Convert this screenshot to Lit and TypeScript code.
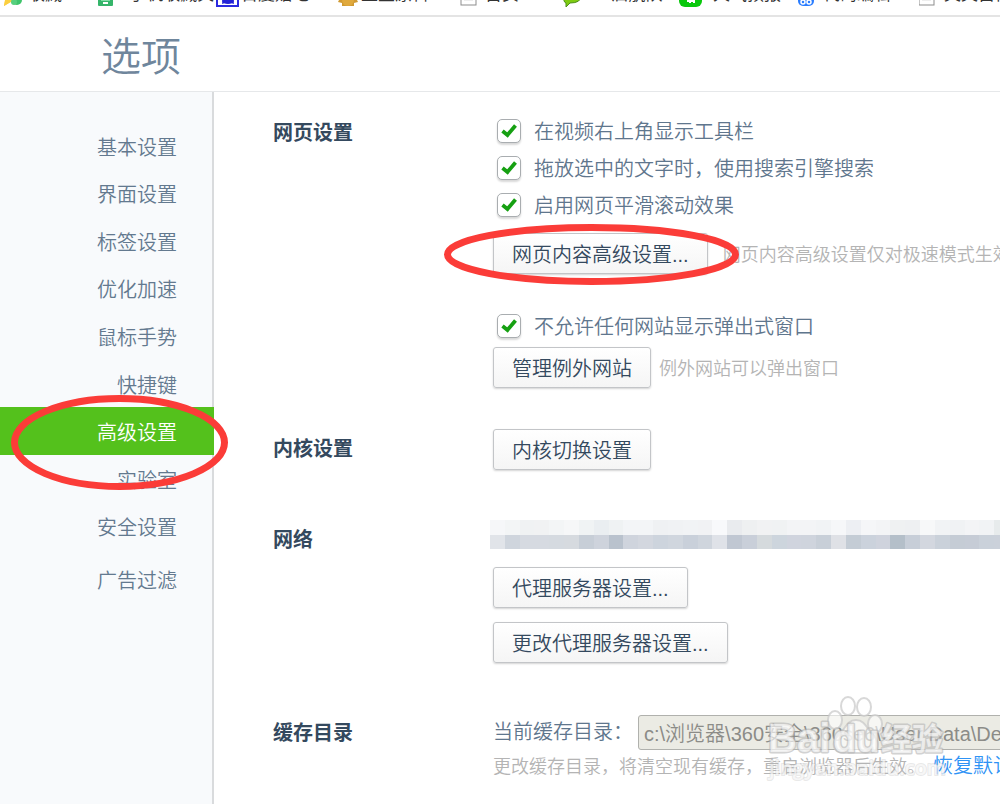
import { LitElement, html, css, svg } from "lit";
import { customElement, state } from "lit/decorators.js";
import { classMap } from "lit/directives/class-map.js";

const BOOKMARKS = [
  { text: "收藏", icon: svg`<path d="M1 0 10 16 1 22 3 12Z" fill="#f9c32c"/><path d="M1 22 8 18 14 21V10H3Z" fill="#fbcf3f"/><circle cx="14" cy="16" r="5" fill="#3fc46b"/><circle cx="11" cy="18" r="3" fill="#57cf7e"/>` },
  { text: "S手机收藏夹", narrow: true, icon: svg`<rect x="0" y="2" width="15" height="20" rx="1" fill="#35b56a"/><rect x="3" y="5" width="9" height="12" fill="#7fdca4"/><rect x="5" y="18" width="5" height="2" fill="#fff"/>` },
  { text: "百度贴吧", icon: svg`<rect x="1" y="1" width="21" height="21" fill="#fff" stroke="#2a2ae0" stroke-width="2"/><path d="M6 20a6 6 0 0 1 12 0q-6-3-12 0Z" fill="#2323d6"/><ellipse cx="12" cy="17" rx="6" ry="3" fill="#2323d6"/>` },
  { text: "土豆原料", icon: svg`<path d="M0 13H24L21 16 22 18 18 19V22H6V19L2 18 3 16Z" fill="#d09a33"/><circle cx="12" cy="16" r="6" fill="#e0a93d"/>` },
  { text: "首页", icon: svg`<rect x="1" y="0" width="15" height="21" fill="#fff" stroke="#8d8d8d"/><path d="M4 16H13" stroke="#ddd"/>` },
  { text: "UK启航队", icon: svg`<path d="M1 12H18Q18 19 7 19L3 23V19Q0 18 1 12Z" fill="#7ecb12" stroke="#4e8f1a"/>` },
  { text: "天气预报", wide: true, icon: svg`<rect x="0" y="0" width="23" height="23" rx="6" fill="#09c80c"/><path d="M8 17H15M11 13V19M15 13V19" stroke="#fff" stroke-width="2"/>` },
  { text: "代码编辑", icon: svg`<rect x="0" y="2" width="16" height="20" rx="5" fill="#2a7dff"/><circle cx="5" cy="18" r="2" fill="none" stroke="#fff" stroke-width="1.5"/><circle cx="11" cy="18" r="2" fill="none" stroke="#fff" stroke-width="1.5"/>` },
  { text: "文文自传", icon: svg`<rect x="0" y="0" width="15" height="21" fill="#fff" stroke="#8d8d8d"/><path d="M3 16H12" stroke="#ddd"/>` },
];

const MENU = ["基本设置", "界面设置", "标签设置", "优化加速", "鼠标手势", "快捷键", "高级设置", "实验室", "安全设置"];

const MOSAIC = [
  "f6f7f9 f3f5f6 f0f2f3 f1f2f3 f3f5f6 f6f7f8 f0f3f4 eaeef1 eff2f3 f3f5f7 f3f5f7 eff1f3 f0f2f4 f1f3f5 f1f2f4 f8f9fb e9ebee eef0f1 f1f2f3 f0f2f3 f3f4f6 f3f4f6 f1f3f5 f6f7f9 edeff3 f5f6f8 f3f4f6 eff1f2 eef0f2 f7f8f9 f1f3f5 f0f2f4 f3f4f6 f1f3f5 e7ebec",
  "e1e4e9 cfd5dd d6dae1 d6dae1 d5dae0 d6dadf c7ced7 ced3dc b9c2cd cfd4dd d3d7df cdd4dd d0d6de c9d0da cfd5dd dfe2e8 c0c7d2 c9cfd9 d5dadd cdd5dd d0d4de cfd4dd c8cfd8 dfe1e6 c4ccd5 cbd2dc cfd3dd b4bfc9 c7ced8 d3d7df cad1da c5ccd5 c6ccd6 cad1da cbd1da",
].map((row) => row.split(" "));

@customElement("option-check")
class OptionCheck extends LitElement {
  static properties = { label: { type: String } };
  declare label: string;

  static styles = css`
    :host { display: block; }
    .row { display: flex; align-items: center; height: 37px; color: #5f768d; }
    .box { display: grid; margin: 0 13px 2px 4px; }
    .input {
      grid-area: 1 / 1; appearance: none; margin: 0; width: 24px; height: 24px;
      border: 1px solid #a9adb0; border-radius: 5px; background: #fff;
      box-shadow: 0 2px 2px #d9d9d9;
    }
    .tick { grid-area: 1 / 1; width: 24px; height: 24px; pointer-events: none; visibility: hidden; }
    .input:checked + .tick { visibility: visible; }
  `;

  render() {
    return html`<label class="row">
      <span class="box">
        <input class="input" type="checkbox" checked />
        <svg class="tick" viewBox="0 0 24 24" aria-hidden="true">
          <path d="M5.5 12 10.5 16 18.5 6.5" fill="none" stroke="#16a012" stroke-width="3.8" />
        </svg>
      </span>
      <span>${this.label}</span>
    </label>`;
  }
}

@customElement("app-root")
class AppRoot extends LitElement {
  @state() active = "高级设置";

  static styles = css`
    :host {
      display: flex; flex-direction: column; position: relative;
      height: 100vh; overflow: hidden; background: #fff; color: #5f768d;
      font-family: "Liberation Sans", "Noto Sans CJK SC", sans-serif;
      font-size: 20px; font-weight: 350; line-height: 24px; white-space: nowrap;
    }
    .bookmarks {
      display: grid; grid-template-columns: 95px 118px 120px 124px 103px 116px 119px 121px 90px;
      align-content: end; height: 15px; padding-left: 3px; overflow: hidden; flex: none;
      border-bottom: 2px solid #e4e4e4;
    }
    .bookmark {
      display: flex; align-items: flex-start; gap: 1px; padding-bottom: 7px;
      color: #333; font-size: 17px; font-weight: 400; line-height: 22px; text-decoration: none;
    }
    .bookmark.narrow { gap: 0; }
    .bookmark.narrow .favicon { margin-right: -4px; }
    .bookmark.wide { gap: 10px; }
    .favicon { width: 24px; height: 24px; flex: none; }
    .header { flex: none; height: 74px; border-bottom: 1px solid #e6e8ea; padding-left: 101px; }
    .title { margin: 0; font-size: 40px; font-weight: 350; line-height: 80px; color: #6f869c; }
    .body { display: flex; flex: 1; min-height: 0; }
    .side { flex: none; width: 212px; background: #f8fafc; border-right: 2px solid #d9dbdd; padding-top: 30px; }
    .menu { display: grid; grid-auto-rows: 1fr; height: 428px; margin: 0; padding: 0; list-style: none; }
    .item { position: relative; display: grid; }
    .link {
      display: flex; align-items: center; justify-content: flex-end;
      padding: 4px 35px 0 0; color: #63798f; text-decoration: none;
    }
    .link.active { background: #54c11c; color: #fff; margin-right: -2px; padding-right: 37px; }
    .extra { display: flex; justify-content: flex-end; margin-top: 5px; height: 48px; }
    .ring { position: absolute; overflow: visible; pointer-events: none; fill: none; stroke: #fb3c38; z-index: 1; }
    .ring-menu { left: 11px; top: -12px; width: 217px; height: 95px; stroke-width: 7px; }
    .ring-button { left: -49px; top: -9px; width: 295px; height: 61px; stroke-width: 7px; }
    .main { flex: 1; min-width: 0; padding: 21px 0 0 59px; overflow: hidden; }
    .section { display: grid; grid-template-columns: 220px minmax(0, 1fr); }
    .heading { margin: 0; font-size: 20px; font-weight: 700; line-height: 40px; color: #34495e; }
    .kernel { margin-top: 41px; }
    .network { margin-top: 50px; }
    .cache { margin-top: 50px; }
    .line { position: relative; display: flex; align-items: center; gap: 8px; }
    .wide-line { gap: 15px; margin: 9px 0 34px; }
    .popup { margin-top: 2px; }
    .button {
      height: 41px; padding: 2px 18px 0; flex: none; font: inherit; color: #34495e;
      border: 1px solid #c3c5c8; border-radius: 3px;
      background: linear-gradient(#fff, #f5f5f5); box-shadow: 0 1px 2px #d4d4d4;
    }
    .stack { display: flex; flex-direction: column; align-items: flex-start; gap: 14px; }
    .hint { font-size: 18px; padding-top: 2px; color: #b4b4b4; }
    .mosaic { width: 519px; height: 29px; margin: 0 0 4px -3px; display: block; }
    .path-row { display: flex; align-items: center; height: 38px; }
    .path-label { width: 145px; flex: none; }
    .path {
      box-sizing: border-box; height: 35px; flex: 1 0 420px; padding: 0 5px; font: inherit;
      color: #8c8c88; background: #ebebe4; border: 1px solid #b0b1ad; border-radius: 3px;
    }
    .note { display: flex; align-items: center; gap: 8px; height: 30px; }
    .reset { color: #2f93f5; text-decoration: none; }
    .watermark { position: absolute; right: 50px; bottom: 13px; width: 184px; height: 100px; pointer-events: none; z-index: 2; }
    .paw { fill: #fff; fill-opacity: 0.6; stroke: #c8c8c8; stroke-opacity: 0.7; stroke-width: 2px; }
    .mark { font-weight: 700; paint-order: stroke; fill: #fff; fill-opacity: 0.65; stroke: #b4b4b4; stroke-opacity: 0.6; stroke-width: 3px; stroke-linejoin: round; }
    .site { font-family: "Open Sans", sans-serif; font-weight: 600; stroke-opacity: 0.3; stroke-width: 2px; }
  `;

  private menuLink(name: string) {
    const active = name === this.active;
    return html`<li class="item">
      <a class=${classMap({ link: true, active })} href="#" @click=${() => (this.active = name)}>${name}</a>
      ${name === "高级设置"
        ? html`<svg class="ring ring-menu" viewBox="0 0 217 95" aria-hidden="true"><ellipse cx="108.5" cy="47.5" rx="105" ry="44" /></svg>`
        : null}
    </li>`;
  }

  render() {
    return html`
      <nav class="bookmarks">
        ${BOOKMARKS.map((b) => html`<a class=${classMap({ bookmark: true, narrow: !!b.narrow, wide: !!b.wide })} href="#"><svg class="favicon" viewBox="0 0 24 24" aria-hidden="true">${b.icon}</svg><span>${b.text}</span></a>`)}
      </nav>
      <header class="header"><h1 class="title">选项</h1></header>
      <div class="body">
        <nav class="side">
          <ul class="menu">${MENU.map((m) => this.menuLink(m))}</ul>
          <div class="extra"><a class="link" href="#">广告过滤</a></div>
        </nav>
        <main class="main">
          <section class="section">
            <h2 class="heading">网页设置</h2>
            <div>
              <option-check label="在视频右上角显示工具栏"></option-check>
              <option-check label="拖放选中的文字时，使用搜索引擎搜索"></option-check>
              <option-check label="启用网页平滑滚动效果"></option-check>
              <div class="line wide-line">
                <button class="button">网页内容高级设置...</button>
                <span class="hint">网页内容高级设置仅对极速模式生效</span>
                <svg class="ring ring-button" viewBox="0 0 295 61" aria-hidden="true"><ellipse cx="147.5" cy="30.5" rx="144" ry="27" /></svg>
              </div>
              <option-check label="不允许任何网站显示弹出式窗口"></option-check>
              <div class="line popup">
                <button class="button">管理例外网站</button>
                <span class="hint">例外网站可以弹出窗口</span>
              </div>
            </div>
          </section>
          <section class="section kernel">
            <h2 class="heading">内核设置</h2>
            <div class="line"><button class="button">内核切换设置</button></div>
          </section>
          <section class="section network">
            <h2 class="heading">网络</h2>
            <div class="stack">
              <svg class="mosaic" viewBox="0 0 35 2" preserveAspectRatio="none" shape-rendering="crispEdges" aria-hidden="true">
                ${MOSAIC.map((row, y) => row.map((c, x) => svg`<rect x=${x} y=${y} width="1" height="1" fill=${"#" + c} />`))}
              </svg>
              <button class="button">代理服务器设置...</button>
              <button class="button">更改代理服务器设置...</button>
            </div>
          </section>
          <section class="section cache">
            <h2 class="heading">缓存目录</h2>
            <div>
              <div class="path-row">
                <label class="path-label" for="path">当前缓存目录：</label>
                <input class="path" id="path" type="text" disabled value="c:\\浏览器\\360安全\\360se6\\User Data\\Default" />
              </div>
              <div class="note">
                <span class="hint">更改缓存目录，将清空现有缓存，重启浏览器后生效。</span>
                <a class="reset" href="#">恢复默认</a>
              </div>
            </div>
          </section>
        </main>
      </div>
      <svg class="watermark" viewBox="0 0 184 100" aria-hidden="true">
        <g class="paw">
          <ellipse cx="82" cy="15" rx="7" ry="9" />
          <ellipse cx="98" cy="16" rx="7" ry="9" />
          <ellipse cx="69" cy="29" rx="7" ry="9" />
          <ellipse cx="109" cy="33" rx="7" ry="9" />
          <path d="M90 29C81 29 79 38 73 44C64 52 67 62 78 62H102C113 62 115 52 107 44C101 38 99 29 90 29Z" />
        </g>
        <text class="mark" x="2" y="61" font-size="40">Bai</text>
        <text class="mark" x="67" y="61" font-size="38">du</text>
        <text class="mark" x="115" y="59" font-size="31">经验</text>
        <text class="mark site" x="3" y="84" font-size="20">jingyan.baidu.com</text>
      </svg>
    `;
  }
}
